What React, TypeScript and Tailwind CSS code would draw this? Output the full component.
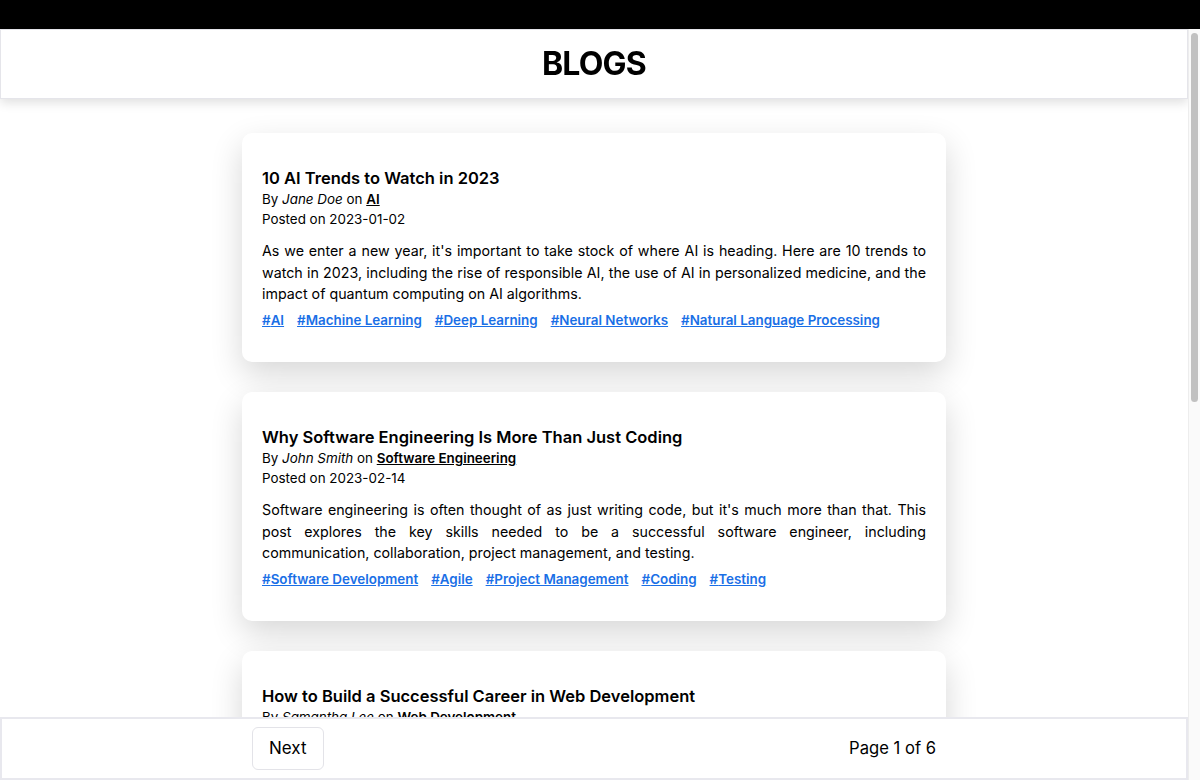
import React from "react";

type Post = {
  title: string;
  author: string;
  category: string;
  date: string;
  body: string;
  tags: string[];
};

const posts: Post[] = [
  {
    title: "10 AI Trends to Watch in 2023",
    author: "Jane Doe",
    category: "AI",
    date: "2023-01-02",
    body:
      "As we enter a new year, it's important to take stock of where AI is heading. Here are 10 trends to watch in 2023, including the rise of responsible AI, the use of AI in personalized medicine, and the impact of quantum computing on AI algorithms.",
    tags: ["AI", "Machine Learning", "Deep Learning", "Neural Networks", "Natural Language Processing"],
  },
  {
    title: "Why Software Engineering Is More Than Just Coding",
    author: "John Smith",
    category: "Software Engineering",
    date: "2023-02-14",
    body:
      "Software engineering is often thought of as just writing code, but it's much more than that. This post explores the key skills needed to be a successful software engineer, including communication, collaboration, project management, and testing.",
    tags: ["Software Development", "Agile", "Project Management", "Coding", "Testing"],
  },
  {
    title: "How to Build a Successful Career in Web Development",
    author: "Samantha Lee",
    category: "Web Development",
    date: "2023-03-08",
    body:
      "Web development is a fast-moving field with plenty of opportunities. In this post we share practical advice for building a lasting career, from choosing the right stack and building a portfolio to networking and keeping your skills up to date.",
    tags: ["Web Development", "Career", "JavaScript", "Frontend", "Portfolio"],
  },
  {
    title: "Getting Started with Cloud Computing",
    author: "Michael Brown",
    category: "Cloud",
    date: "2023-04-21",
    body:
      "Cloud computing has changed the way businesses build and run software. This beginner's guide covers the core concepts, the differences between IaaS, PaaS and SaaS, and how to choose the right provider for your next project.",
    tags: ["Cloud", "AWS", "DevOps", "Infrastructure", "Serverless"],
  },
  {
    title: "The Basics of Cybersecurity for Developers",
    author: "Emily Chen",
    category: "Security",
    date: "2023-05-17",
    body:
      "Security should never be an afterthought. Learn the fundamentals every developer should know, including secure authentication, input validation, encryption, and how to protect your applications against the most common attacks.",
    tags: ["Security", "Encryption", "Authentication", "OWASP", "Best Practices"],
  },
];

function Card({ p }: { p: Post }) {
  return (
    <article className="w-[704px] rounded-[10px] bg-white px-5 pt-[34px] pb-[31px] shadow-[0_12px_32px_rgba(0,0,0,0.16)]">
      <h2 className="text-[16.5px] font-semibold leading-[22px] text-black">{p.title}</h2>
      <p className="text-[13.4px] leading-[20px] text-black">
        By <em>{p.author}</em> on{" "}
        <a className="font-semibold underline">{p.category}</a>
      </p>
      <p className="text-[13.4px] leading-[20px] text-black">Posted on {p.date}</p>
      <p className="mt-[11px] text-justify text-[14.25px] leading-[21.5px] text-black">{p.body}</p>
      <div className="mt-[4.5px] flex flex-wrap gap-x-[13px] text-[13.4px] leading-[22px]">
        {p.tags.map((t) => (
          <a key={t} className="font-semibold text-[#1a6fe6] underline">
            #{t}
          </a>
        ))}
      </div>
    </article>
  );
}

export default function App() {
  return (
    <div className="flex h-[780px] flex-col bg-black" style={{ fontFamily: "Inter, 'Noto Sans', sans-serif" }}>
      <div className="h-[29px] shrink-0 bg-black" />
      <div className="flex h-[751px] bg-white">
        <div className="relative h-full flex-1 overflow-y-auto bg-white">
          <header className="sticky top-0 z-10 flex h-[70px] items-center justify-center border border-[#e5e5ea] bg-white shadow-[0_4px_10px_rgba(0,0,0,0.12)]">
            <h1 className="text-[32px] font-bold tracking-tight text-black">BLOGS</h1>
          </header>
          <main className="flex flex-col items-center gap-[30px] pt-[34px] pb-[90px]">
            {posts.map((p) => (
              <Card key={p.title} p={p} />
            ))}
          </main>
          <footer className="sticky bottom-0 z-10 flex h-[63px] justify-center border-2 border-[#e8e8ee] bg-white">
            <div className="flex w-[704px] items-center justify-between px-[10px]">
              <button className="rounded-md border border-[#e3e3e8] bg-white px-4 py-2 text-[17px] leading-[25px] text-black">
                Next
              </button>
              <span className="text-[16.6px] text-black">Page 1 of 6</span>
            </div>
          </footer>
        </div>
        <div className="flex w-[12px] shrink-0 flex-col border-l border-[#ededed] bg-[#fafafa] px-[2px] pt-[4px]">
          <div className="h-[369px] w-full rounded-full bg-[#c1c1c1]" />
        </div>
      </div>
    </div>
  );
}
